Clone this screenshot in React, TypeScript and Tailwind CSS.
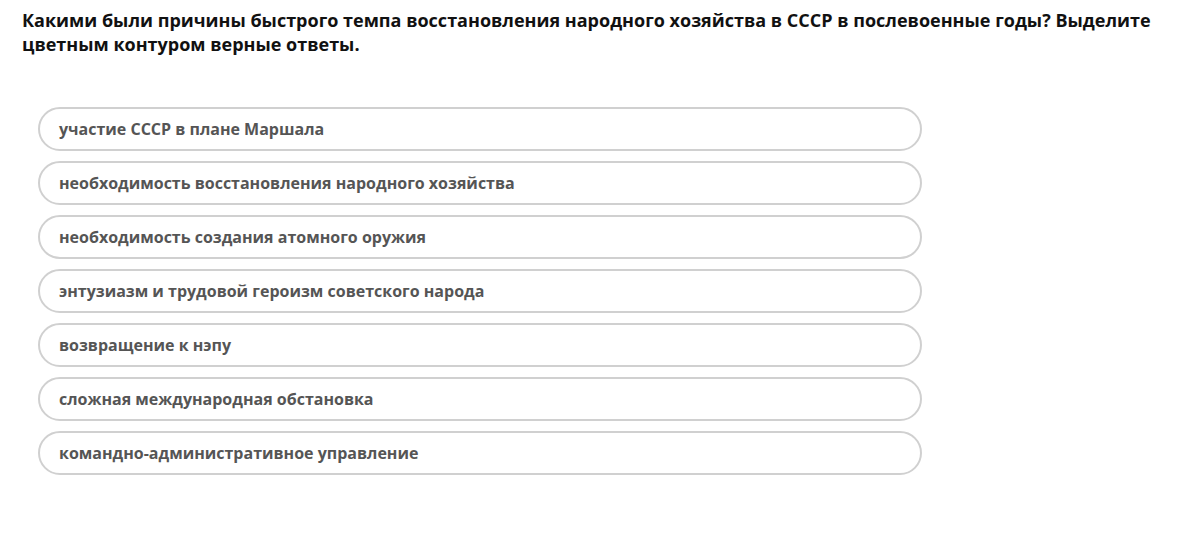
import React from "react";

const items = [
  "участие СССР в плане Маршала",
  "необходимость восстановления народного хозяйства",
  "необходимость создания атомного оружия",
  "энтузиазм и трудовой героизм советского народа",
  "возвращение к нэпу",
  "сложная международная обстановка",
  "командно-административное управление",
];

export default function App() {
  return (
    <div className="w-[1194px] h-[538px] bg-white font-['Open_Sans',sans-serif] px-[22px] pt-[8px]">
      <h1 className="text-[18px] leading-[24px] font-bold text-[#111]">
        Какими были причины быстрого темпа восстановления народного хозяйства в СССР в послевоенные годы? Выделите цветным контуром верные ответы.
      </h1>
      <div className="mt-[51px] ml-[16px] w-[884px] flex flex-col gap-[10px]">
        {items.map((t) => (
          <div
            key={t}
            className="h-[44px] rounded-full border-2 border-[#d0d0d0] flex items-center pl-[19px] text-[16px] font-bold text-[#555]"
          >
            {t}
          </div>
        ))}
      </div>
    </div>
  );
}
